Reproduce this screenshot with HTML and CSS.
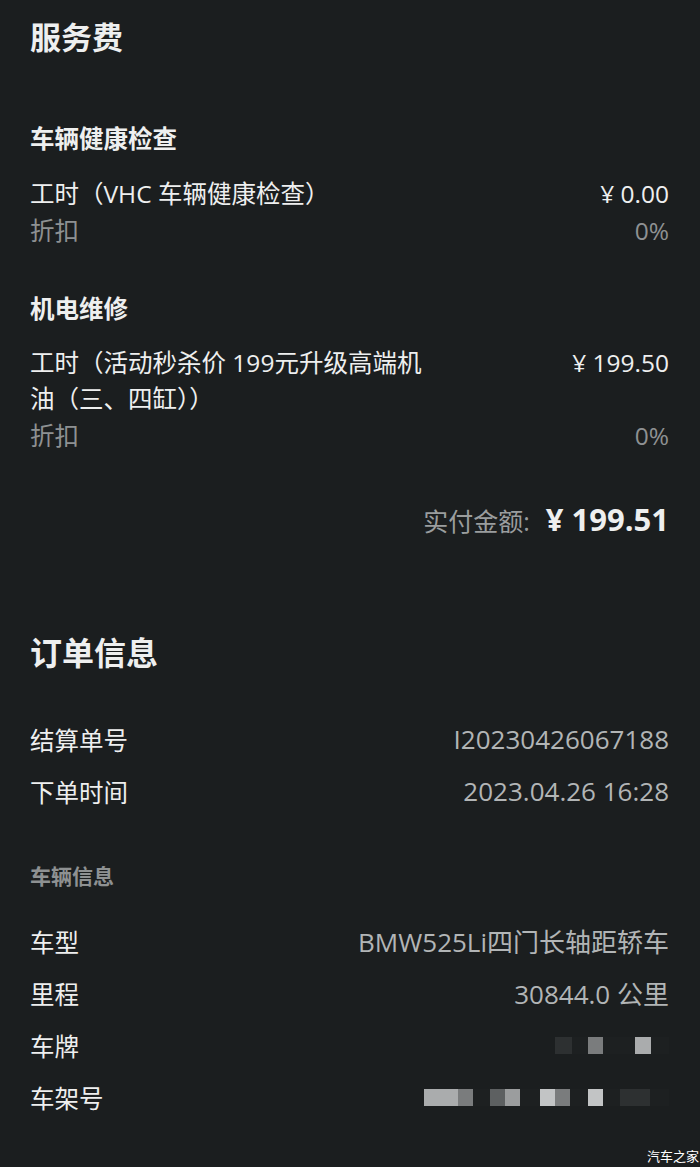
FILE: index.html
```html
<!DOCTYPE html>
<html lang="zh">
<head>
<meta charset="utf-8">
<link rel="stylesheet" href="styles.css">
</head>
<body>
<main class="page">
  <h1 class="title">服务费</h1>

  <h2 class="sub sub-first">车辆健康检查</h2>
  <div class="row">
    <span class="label">工时（VHC 车辆健康检查）</span>
    <span class="amount">¥ 0.00</span>
  </div>
  <div class="row muted">
    <span>折扣</span>
    <span>0%</span>
  </div>

  <h2 class="sub sub-second">机电维修</h2>
  <div class="row multi">
    <span class="label wrap">工时（活动秒杀价 199元升级高端机油（三、四缸））</span>
    <span class="amount">¥ 199.50</span>
  </div>
  <div class="row muted">
    <span>折扣</span>
    <span>0%</span>
  </div>

  <div class="total">
    <span class="total-label">实付金额:</span>
    <span class="total-value">¥ 199.51</span>
  </div>

  <h1 class="title title-order">订单信息</h1>

  <div class="info first">
    <span>结算单号</span>
    <span class="val">I20230426067188</span>
  </div>
  <div class="info">
    <span>下单时间</span>
    <span class="val">2023.04.26 16:28</span>
  </div>

  <h3 class="caption">车辆信息</h3>

  <div class="info first-car">
    <span>车型</span>
    <span class="val">BMW525Li四门长轴距轿车</span>
  </div>
  <div class="info">
    <span>里程</span>
    <span class="val">30844.0 公里</span>
  </div>
  <div class="info">
    <span>车牌</span>
    <span class="pix">
      <i class="px w17 c1"></i><i class="px w16 c0"></i><i class="px w15 c3"></i><i class="px w32 c0"></i><i class="px w16 c5"></i><i class="px w18 c0"></i>
    </span>
  </div>
  <div class="info">
    <span>车架号</span>
    <span class="pix">
      <i class="px w34 c5"></i><i class="px w15 c3"></i><i class="px w17 c0"></i><i class="px w15 c2"></i><i class="px w15 c4"></i><i class="px w20 c0"></i><i class="px w15 c6"></i><i class="px w15 c3"></i><i class="px w18 c0"></i><i class="px w15 c6"></i><i class="px w17 c0"></i><i class="px w30 c1"></i><i class="px w19 c0"></i>
    </span>
  </div>
</main>
<div class="watermark">汽车之家</div>
</body>
</html>
```

FILE: styles.css
```css
html, body {
  margin: 0;
  padding: 0;
  background: #1b1e1f;
}
body {
  width: 700px;
  height: 1167px;
  overflow: hidden;
  position: relative;
  font-family: "Open Sans", "Noto Sans CJK SC", sans-serif;
  color: #eeefef;
}
.page {
  padding: 17px 31px 0 30px;
}
.title {
  margin: 0;
  font-size: 31px;
  line-height: 40px;
  font-weight: 700;
}
.title-order {
  margin-top: 92px;
  font-size: 32px;
}
.sub {
  margin: 0;
  font-size: 24.5px;
  line-height: 30px;
  font-weight: 700;
}
.sub-first { margin-top: 67px; margin-bottom: 21px; }
.sub-second { margin-top: 45px; margin-bottom: 21px; }
.row {
  display: flex;
  justify-content: space-between;
  align-items: flex-start;
  font-size: 24.5px;
  line-height: 37px;
}
.row.multi { line-height: 36px; }
.label.wrap { width: 405px; }
.amount { white-space: nowrap; }
.muted { color: #8e9192; }
.total {
  display: flex;
  justify-content: flex-end;
  align-items: baseline;
  gap: 16px;
  margin-top: 45px;
  line-height: 40px;
}
.total-label {
  font-size: 25px;
  color: #9a9d9e;
}
.total-value {
  font-size: 31px;
  font-weight: 700;
}
.info {
  display: flex;
  justify-content: space-between;
  align-items: center;
  height: 52px;
  font-size: 24.5px;
}
.info.first { margin-top: 40px; }
.info.first-car { margin-top: 24px; }
.val {
  font-size: 26px;
  color: #b2b5b6;
}
.caption {
  margin: 44px 0 0;
  font-size: 21px;
  line-height: 30px;
  font-weight: 700;
  color: #8e9192;
}
.pix {
  display: flex;
  align-items: center;
}
.px {
  display: block;
  height: 17px;
}
.w15 { width: 15px; }
.w16 { width: 16px; }
.w17 { width: 17px; }
.w18 { width: 18px; }
.w19 { width: 19px; }
.w20 { width: 20px; }
.w30 { width: 30px; }
.w32 { width: 32px; }
.w34 { width: 34px; }
.c0 { background: #1d2021; }
.c1 { background: #2d3031; }
.c2 { background: #5d6061; }
.c3 { background: #7a7c7d; }
.c4 { background: #9b9d9e; }
.c5 { background: #aaacad; }
.c6 { background: #c2c4c5; }
.watermark {
  position: absolute;
  right: 1px;
  bottom: 3px;
  font-size: 13px;
  line-height: 16px;
  color: #ffffff;
}
```
